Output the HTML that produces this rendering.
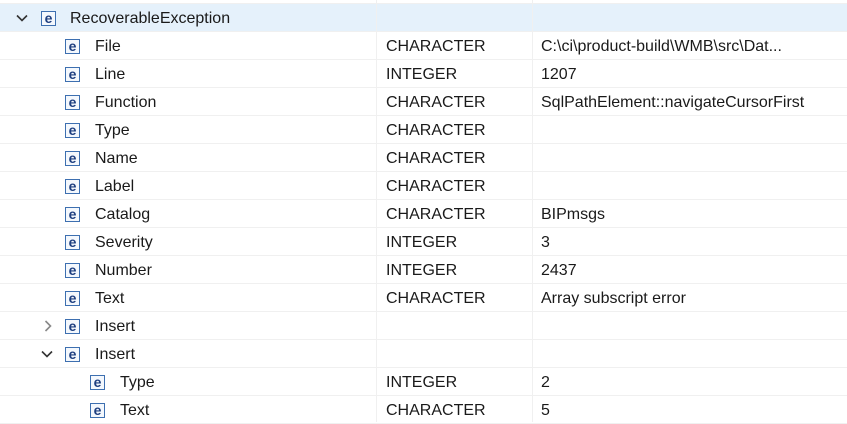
<!DOCTYPE html><html><head><style>
body{margin:0;width:847px;height:422px;overflow:hidden;background:#fff;font-family:"Liberation Sans",sans-serif;font-size:16px;color:#1a1a1a;position:relative}
.r{position:absolute;left:0;width:847px;height:28px;border-bottom:1px solid #f0f0f0;box-sizing:border-box}
.hl{background:#e5f1fb}
.t{position:absolute;top:6px;white-space:nowrap}
.ic{position:absolute;top:7px;width:13px;height:13px;border:1px solid #3d6fb0;background:#f4f8fd;color:#1e3f80;font-weight:bold;font-size:14px;line-height:12px;text-align:center}
.v{position:absolute;top:0;width:1px;height:422px;background:#f0f0f0}
svg{position:absolute}
</style></head><body>
<div class="r hl" style="top:4px"><svg style="left:16px;top:10px" width="12" height="8"><path d="M1 1.5L6 6.5L11 1.5" stroke="#333" stroke-width="1.6" fill="none"/></svg><div class="ic" style="left:41px">e</div><span class="t" style="left:70px">RecoverableException</span></div>
<div class="r" style="top:32px"><div class="ic" style="left:65px">e</div><span class="t" style="left:95px">File</span><span class="t" style="left:386px">CHARACTER</span><span class="t" style="left:541px">C:\ci\product-build\WMB\src\Dat...</span></div>
<div class="r" style="top:60px"><div class="ic" style="left:65px">e</div><span class="t" style="left:95px">Line</span><span class="t" style="left:386px">INTEGER</span><span class="t" style="left:541px">1207</span></div>
<div class="r" style="top:88px"><div class="ic" style="left:65px">e</div><span class="t" style="left:95px">Function</span><span class="t" style="left:386px">CHARACTER</span><span class="t" style="left:541px">SqlPathElement::navigateCursorFirst</span></div>
<div class="r" style="top:116px"><div class="ic" style="left:65px">e</div><span class="t" style="left:95px">Type</span><span class="t" style="left:386px">CHARACTER</span></div>
<div class="r" style="top:144px"><div class="ic" style="left:65px">e</div><span class="t" style="left:95px">Name</span><span class="t" style="left:386px">CHARACTER</span></div>
<div class="r" style="top:172px"><div class="ic" style="left:65px">e</div><span class="t" style="left:95px">Label</span><span class="t" style="left:386px">CHARACTER</span></div>
<div class="r" style="top:200px"><div class="ic" style="left:65px">e</div><span class="t" style="left:95px">Catalog</span><span class="t" style="left:386px">CHARACTER</span><span class="t" style="left:541px">BIPmsgs</span></div>
<div class="r" style="top:228px"><div class="ic" style="left:65px">e</div><span class="t" style="left:95px">Severity</span><span class="t" style="left:386px">INTEGER</span><span class="t" style="left:541px">3</span></div>
<div class="r" style="top:256px"><div class="ic" style="left:65px">e</div><span class="t" style="left:95px">Number</span><span class="t" style="left:386px">INTEGER</span><span class="t" style="left:541px">2437</span></div>
<div class="r" style="top:284px"><div class="ic" style="left:65px">e</div><span class="t" style="left:95px">Text</span><span class="t" style="left:386px">CHARACTER</span><span class="t" style="left:541px">Array subscript error</span></div>
<div class="r" style="top:312px"><svg style="left:44px;top:8px" width="8" height="12"><path d="M1.5 1L6.5 6L1.5 11" stroke="#888" stroke-width="1.6" fill="none"/></svg><div class="ic" style="left:65px">e</div><span class="t" style="left:95px">Insert</span></div>
<div class="r" style="top:340px"><svg style="left:41px;top:10px" width="12" height="8"><path d="M1 1.5L6 6.5L11 1.5" stroke="#333" stroke-width="1.6" fill="none"/></svg><div class="ic" style="left:65px">e</div><span class="t" style="left:95px">Insert</span></div>
<div class="r" style="top:368px"><div class="ic" style="left:90px">e</div><span class="t" style="left:120px">Type</span><span class="t" style="left:386px">INTEGER</span><span class="t" style="left:541px">2</span></div>
<div class="r" style="top:396px"><div class="ic" style="left:90px">e</div><span class="t" style="left:120px">Text</span><span class="t" style="left:386px">CHARACTER</span><span class="t" style="left:541px">5</span></div>
<div class="r" style="top:-24px"></div>
<div class="v" style="left:376px"></div><div class="v" style="left:532px"></div>
</body></html>
